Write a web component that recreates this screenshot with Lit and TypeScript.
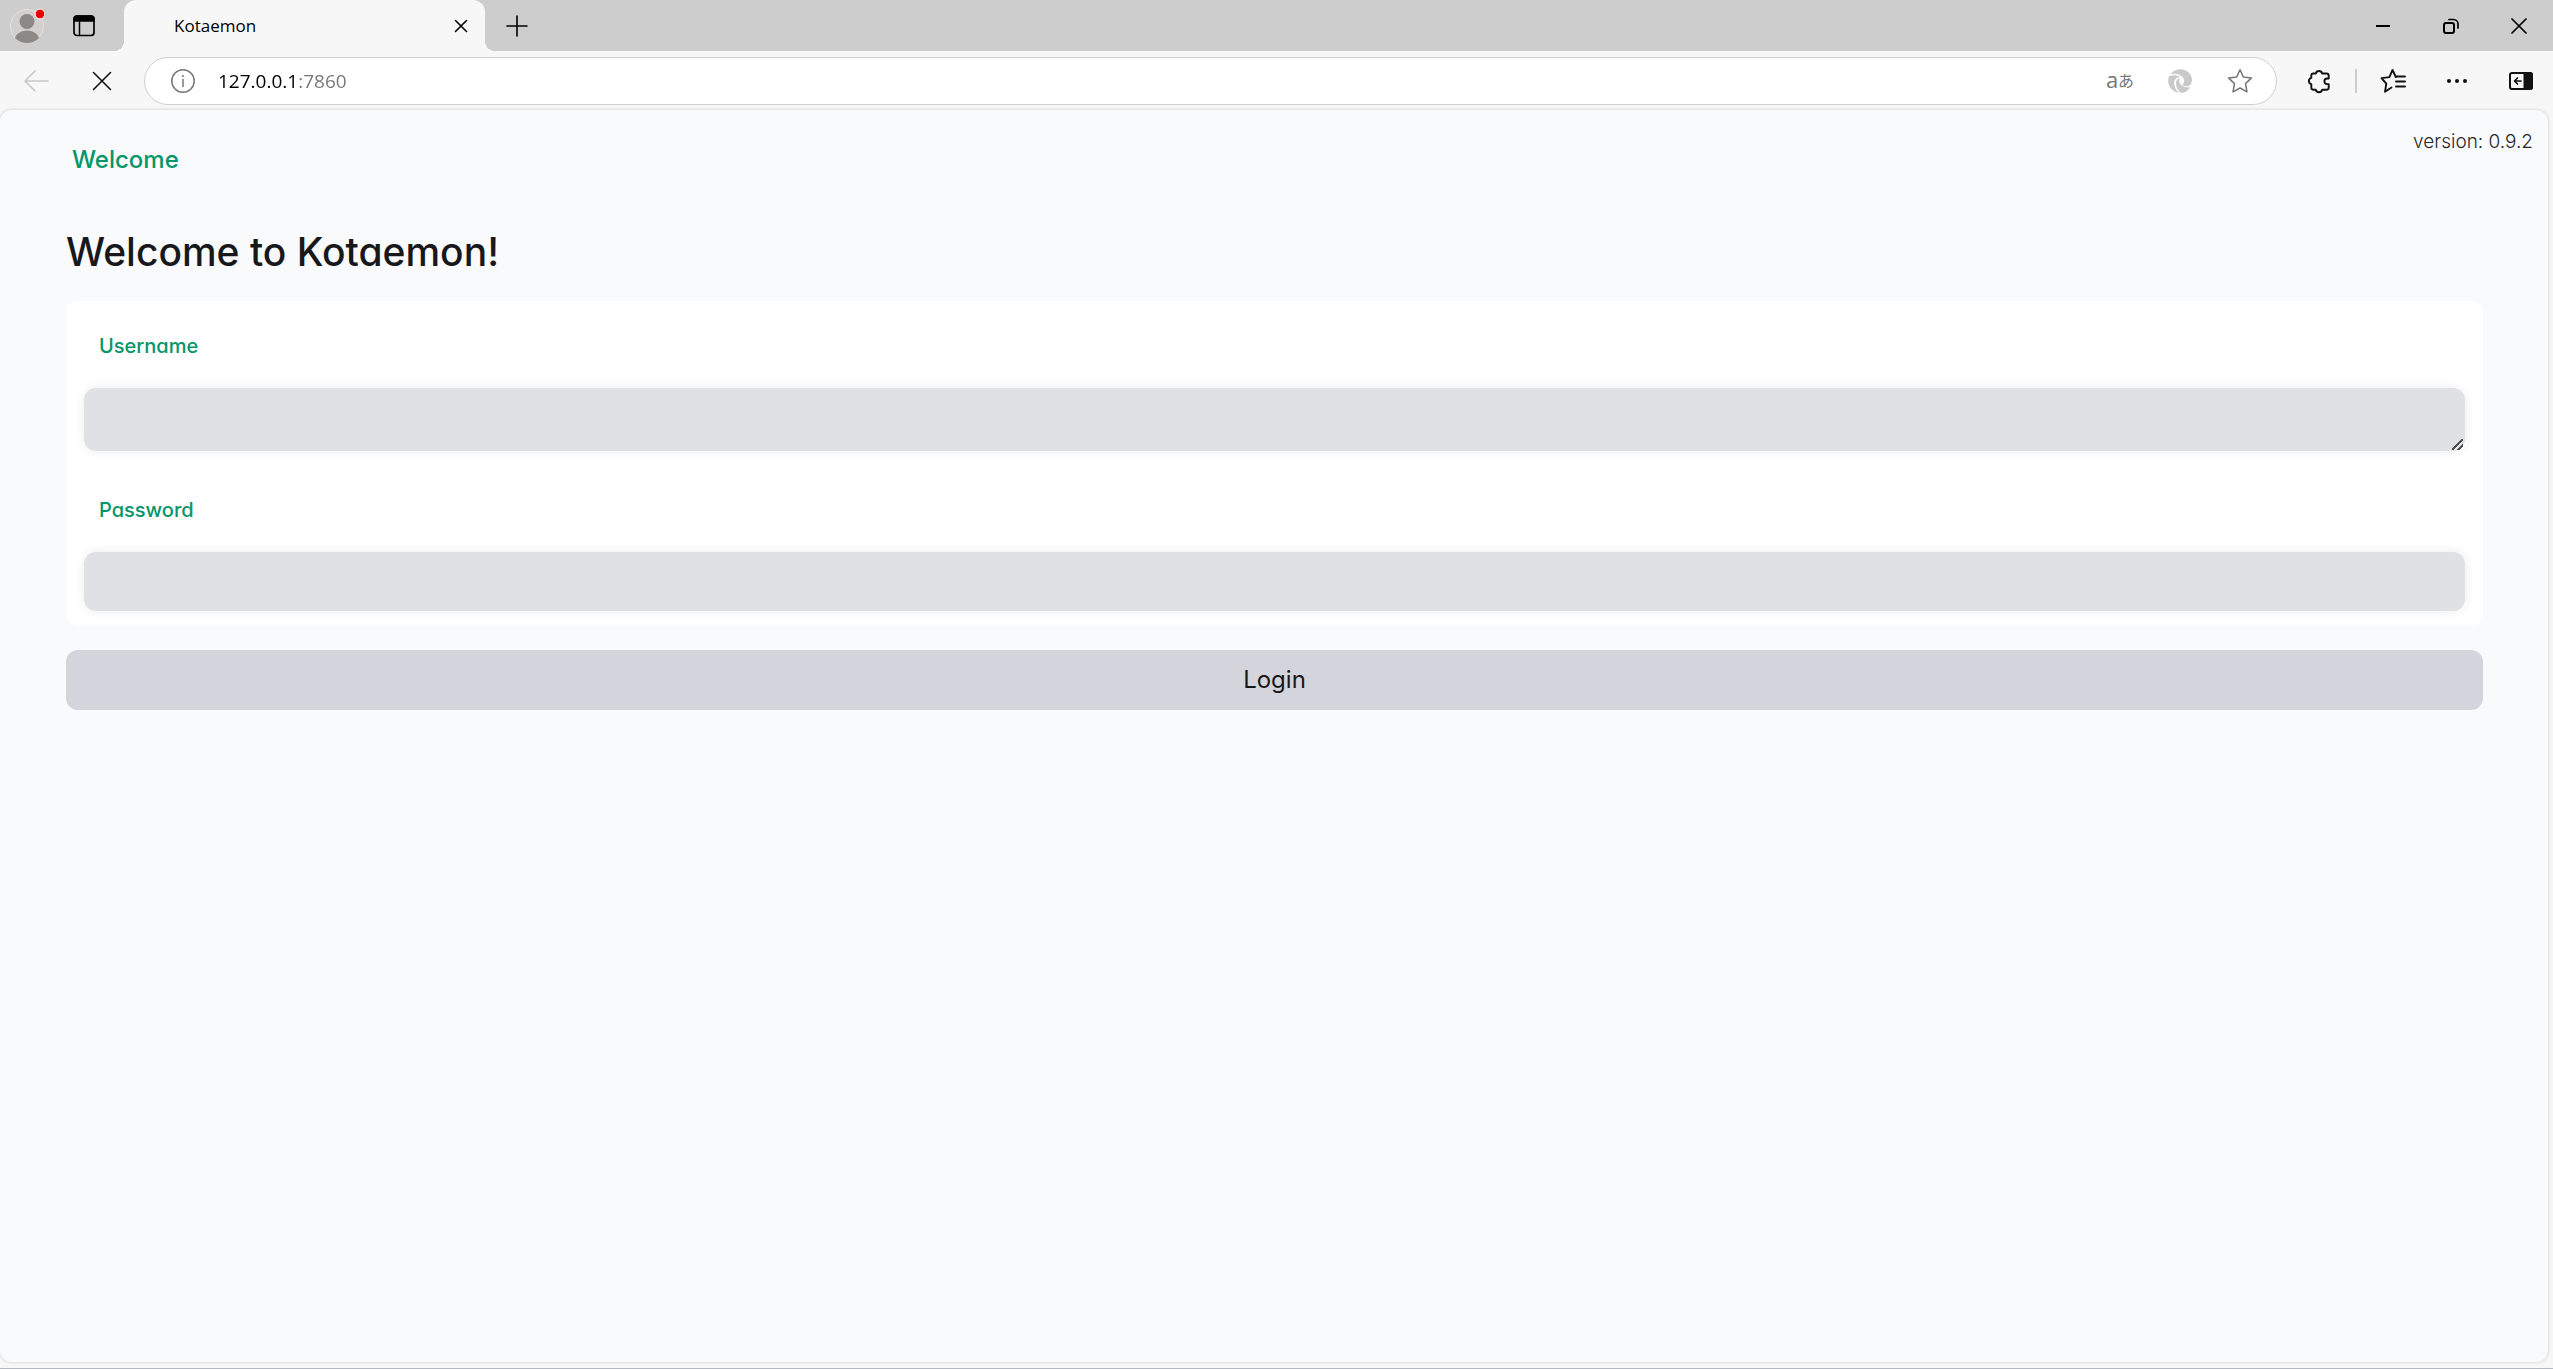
import { LitElement, html, css, svg } from "lit";
import { customElement, state } from "lit/decorators.js";

const icon = (w: number, h: number, body: unknown) =>
  html`<svg width=${w} height=${h} viewBox="0 0 ${w} ${h}" fill="none" stroke="currentColor"
    stroke-width="2" stroke-linecap="round" stroke-linejoin="round" aria-hidden="true">${body}</svg>`;

const icons = {
  profile: icon(36, 36, svg`
    <clipPath id="face"><circle cx="18" cy="18" r="17"/></clipPath>
    <circle cx="18" cy="18" r="16.5" fill="#d2d0ce" stroke="#e4e2e0" stroke-width="1"/>
    <g fill="#8c8885" stroke="none" clip-path="url(#face)">
      <circle cx="18" cy="13.5" r="7.5"/>
      <path d="M5.500 33a12.500 10.500 0 0 1 25 0v4h-25z"/>
    </g>
    <circle cx="31" cy="6" r="4.900" fill="#e60000" stroke="#fff" stroke-width="1"/>`),
  tabs: icon(24, 24, svg`
    <rect x="2" y="2" width="20" height="19.500" rx="3" stroke-width="1.700"/>
    <path d="M2 7V5a3 3 0 0 1 3-3h14a3 3 0 0 1 3 3v2z" fill="currentColor" stroke-width="1.500"/>
    <path d="M7.500 7v14" stroke-width="1.500"/>`),
  tabClose: icon(14, 14, svg`<path d="M1.500 1.500l11 11M12.500 1.500l-11 11" stroke-width="1.600"/>`),
  plus: icon(22, 22, svg`<path d="M11 1v20M1 11h20" stroke-width="1.600"/>`),
  minimize: icon(16, 16, svg`<path d="M1 8h14" stroke-linecap="butt"/>`),
  restore: icon(16, 16, svg`
    <rect x="1" y="5" width="10" height="10" rx="2"/>
    <path d="M6 1.500h4.500a4.500 4.500 0 0 1 4.500 4.500v4" stroke-width="1.700"/>`),
  winClose: icon(16, 16, svg`<path d="M1 1l14 14M15 1L1 15" stroke-width="1.700"/>`),
  back: icon(26, 24, svg`<path d="M25 12H2M12 2L2 12l10 10" stroke-width="1.600"/>`),
  stop: icon(20, 20, svg`<path d="M1.500 1.500l17 17M18.500 1.500l-17 17" stroke-width="1.600"/>`),
  info: icon(24, 24, svg`
    <circle cx="12" cy="12" r="11.200" stroke-width="1.500"/>
    <path d="M12 10.500v7" stroke-width="1.500"/>
    <circle cx="12" cy="7" r="1" fill="currentColor" stroke="none"/>`),
  swirl: icon(26, 26, svg`
    <g fill="currentColor" stroke="none">
      <path d="M3.500 6C7 1.500 14 -.5 19.500 2.800C24 5.500 25.500 10 24.800 13.500C24 18 20.500 19.300 15 17.300C17.500 15 17.800 12 16 9.500C13.500 6 9 5 3.500 6z"/>
      <path d="M2 8.200C6 6.800 10.500 7.200 13 9C9.500 9 7 12 7.200 15.500C7.400 19 9 22.500 12 24.600C4 24 -.8 16 2 8.200z"/>
      <path d="M9.200 13.500C9.800 11.500 11 10.300 12.800 10.200C10.800 14 14 20 23 19.300C21 23 17.500 25 14 24.900C10.500 22.500 8.500 18 9.200 13.500z"/>
    </g>`),
  star: icon(26, 26, svg`
    <path d="M13 1.800l3.400 7.300 7.900 1-5.800 5.500 1.500 8.200-7-3.800-7 3.800 1.500-8.200-5.800-5.500 7.900-1z" stroke-width="1.500"/>`),
  puzzle: icon(24, 26, svg`
    <path d="M6.300 5.500h2.500a3.300 3.300 0 0 1 6.400 0h4.300a2.200 2.200 0 0 1 2.200 2.200v2.800h-1.500a2.800 2.800 0 0 0 0 5.600h1.500v3.400a2.200 2.200 0 0 1-2.200 2.200h-4.300a3.300 3.300 0 0 1-6.400 0H6.500a2.200 2.200 0 0 1-2.200-2.200v-3.400a3.200 3.200 0 0 1 0-6.200V7.500a2 2 0 0 1 2-2z" stroke-width="1.900"/>`),
  favorites: icon(26, 26, svg`
    <path d="M11.500 19.500l-6.500 4.300 1.300-8.200L1.500 10.100l7.900-1L12.500 2l3.300 7" stroke-width="1.900"/>
    <path d="M16 8.500h9M16 13.500h9M16 18.500h9" stroke-width="1.900"/>`),
  more: icon(22, 6, svg`
    <g fill="currentColor" stroke="none"><circle cx="3" cy="3" r="2"/><circle cx="11" cy="3" r="2"/><circle cx="19" cy="3" r="2"/></g>`),
  sidebar: icon(26, 20, svg`
    <rect x="2" y="2" width="22" height="16" rx="2"/>
    <path d="M16.500 2H22a2 2 0 0 1 2 2v12a2 2 0 0 1-2 2h-5.500z" fill="currentColor"/>
    <path d="M13 10H7M9.500 7L6.500 10l3 3" stroke-width="1.700"/>`),
};

@customElement("browser-tabs")
class BrowserTabs extends LitElement {
  static styles = css`
    :host { display: flex; height: 51px; background: #cdcdcd; color: #000; font-family: "Open Sans", "Noto Sans", sans-serif; }
    button { display: flex; align-items: center; justify-content: center; padding: 0; border: 0; background: none; color: inherit; }
    svg { display: block; }
    .profile { width: 36px; margin-left: 9px; }
    .actions { width: 24px; margin: 0 28px 0 27px; }
    .tab { position: relative; box-sizing: border-box; display: flex; align-items: center; justify-content: space-between; width: 361px; padding: 0 17px 0 50px; border-radius: 12px 12px 0 0; background: #f7f7f7; font-size: 17px; }
    .tab::before, .tab::after { content: ""; position: absolute; bottom: 0; width: 10px; height: 10px; }
    .tab::before { right: 100%; background: radial-gradient(circle at 0 0, transparent 10px, #f7f7f7 10px); }
    .tab::after { left: 100%; background: radial-gradient(circle at 100% 0, transparent 10px, #f7f7f7 10px); }
    .new { width: 64px; }
    .controls { display: flex; margin-left: auto; }
    .controls button { width: 68px; }
  `;
  render() {
    return html`
      <button class="profile" aria-label="Profile">${icons.profile}</button>
      <button class="actions" aria-label="Tab actions">${icons.tabs}</button>
      <div class="tab"><span>Kotaemon</span><button aria-label="Close tab">${icons.tabClose}</button></div>
      <button class="new" aria-label="New tab">${icons.plus}</button>
      <div class="controls">
        <button aria-label="Minimize">${icons.minimize}</button>
        <button aria-label="Restore">${icons.restore}</button>
        <button aria-label="Close">${icons.winClose}</button>
      </div>`;
  }
}

@customElement("browser-toolbar")
class BrowserToolbar extends LitElement {
  static styles = css`
    :host { display: flex; align-items: center; padding: 6px 0 5px 3px; background: #f7f7f7; color: #111; }
    button { display: flex; align-items: center; justify-content: center; flex: none; width: 64px; height: 46px; padding: 0; border: 0; background: none; color: inherit; }
    svg { display: block; }
    .nav { width: 66px; }
    .nav:disabled { color: #c8c8c8; }
    .address { flex: 1; display: flex; align-items: center; min-width: 0; margin: 0 10px 0 9px; padding: 0 6px 0 26px; border: 1px solid #cfcfcf; border-radius: 24px; background: #fff; color: #767676; }
    .address .site { width: 24px; }
    .address .tool { width: 60px; }
    .address .swirl { color: #c9c9c9; }
    .address .translate { font: 22px/32px "Open Sans", sans-serif; padding-bottom: 4px; }
    .kana { font: 16px/32px "Noto Sans CJK JP", sans-serif; padding-top: 2px; }
    .url { flex: 1; min-width: 0; padding: 0; margin-left: 23px; border: 0; outline: 0; font: 19px "Open Sans", "Noto Sans", sans-serif; color: transparent; background: linear-gradient(90deg, #000 80px, #767676 80px); -webkit-background-clip: text; background-clip: text; }
    .divider { width: 2px; height: 24px; margin: 0 4px; background: #cdcdcd; }
  `;
  render() {
    return html`
      <button class="nav" disabled aria-label="Back">${icons.back}</button>
      <button class="nav" aria-label="Stop loading">${icons.stop}</button>
      <div class="address">
        <button class="site" aria-label="Site information">${icons.info}</button>
        <input class="url" aria-label="Address" .value=${"127.0.0.1:7860"} />
        <button class="tool translate" aria-label="Translate">a<span class="kana">あ</span></button>
        <button class="tool swirl" aria-label="Shopping">${icons.swirl}</button>
        <button class="tool" aria-label="Add to favorites">${icons.star}</button>
      </div>
      <button aria-label="Extensions">${icons.puzzle}</button>
      <span class="divider"></span>
      <button aria-label="Favorites">${icons.favorites}</button>
      <button aria-label="Settings and more">${icons.more}</button>
      <button aria-label="Sidebar">${icons.sidebar}</button>`;
  }
}

@customElement("login-page")
class LoginPage extends LitElement {
  static styles = css`
    :host { display: block; box-sizing: border-box; padding: 0 65px 0 66px; border-radius: 12px; background: #f9fafc; color: #18181b; font-family: Inter, "Open Sans", sans-serif; font-feature-settings: "cv11"; box-shadow: 0 0 3px 1px #dedede; }
    header { display: flex; justify-content: space-between; align-items: flex-start; margin-right: -50px; }
    nav a { display: block; padding: 34px 6px 0; font-size: 24px; line-height: 32px; font-weight: 500; color: #059669; text-decoration: none; }
    .version { padding-top: 16px; font-size: 19px; line-height: 32px; font-weight: 300; color: #27272a; }
    h1 { margin: 52px 0 25px; font-size: 39px; line-height: 48px; font-weight: 500; }
    .card { display: flex; flex-direction: column; gap: 29px; padding: 15px 18px; border-radius: 12px; background: #fff; }
    .field { display: flex; flex-direction: column; gap: 12px; }
    label { padding: 0 15px; font-size: 20px; line-height: 60px; font-weight: 500; color: #059669; }
    textarea, input { display: block; box-sizing: border-box; width: 100%; margin: 0; padding: 12px 15px; border: 0; border-radius: 12px; background: #e0e1e5; box-shadow: 0 0 12px rgba(0, 0, 0, 0.08); font: inherit; font-size: 24px; outline: 0; }
    textarea { height: 63px; resize: vertical; overflow: hidden; }
    textarea::-webkit-resizer { background:
      linear-gradient(135deg, transparent 44%, #505055 44% 56%, #f4f4f6 56% 62%, transparent 62% 71%, #505055 71% 83%, #f4f4f6 83% 88%, transparent 88%) right 2px bottom 1px / 11px 11px no-repeat; }
    input { height: 59px; }
    .login { display: block; width: 100%; margin-top: 24px; padding: 14px; border: 0; border-radius: 12px; background: #d4d4dd; color: #18181b; font: inherit; font-size: 24px; line-height: 32px; font-weight: 400; }
  `;
  @state() username = "";
  @state() password = "";
  render() {
    return html`
      <header>
        <nav><a href="#welcome">Welcome</a></nav>
        <div class="version">version: 0.9.2</div>
      </header>
      <h1>Welcome to Kotaemon!</h1>
      <form @submit=${(e: Event) => e.preventDefault()}>
        <div class="card">
          <div class="field">
            <label for="user">Username</label>
            <textarea id="user" rows="1" .value=${this.username}
              @input=${(e: Event) => (this.username = (e.target as HTMLTextAreaElement).value)}></textarea>
          </div>
          <div class="field">
            <label for="pass">Password</label>
            <input id="pass" type="password" .value=${this.password}
              @input=${(e: Event) => (this.password = (e.target as HTMLInputElement).value)} />
          </div>
        </div>
        <button class="login" type="submit">Login</button>
      </form>`;
  }
}

@customElement("app-root")
class AppRoot extends LitElement {
  static styles = css`
    :host { display: flex; flex-direction: column; box-sizing: border-box; min-height: 100vh; border-bottom: 1px solid #b4b8c0; background: #f7f7f7; }
    login-page { flex: 1; margin: 0 5px 6px 0; }
  `;
  render() {
    return html`
      <browser-tabs></browser-tabs>
      <browser-toolbar></browser-toolbar>
      <login-page></login-page>`;
  }
}
